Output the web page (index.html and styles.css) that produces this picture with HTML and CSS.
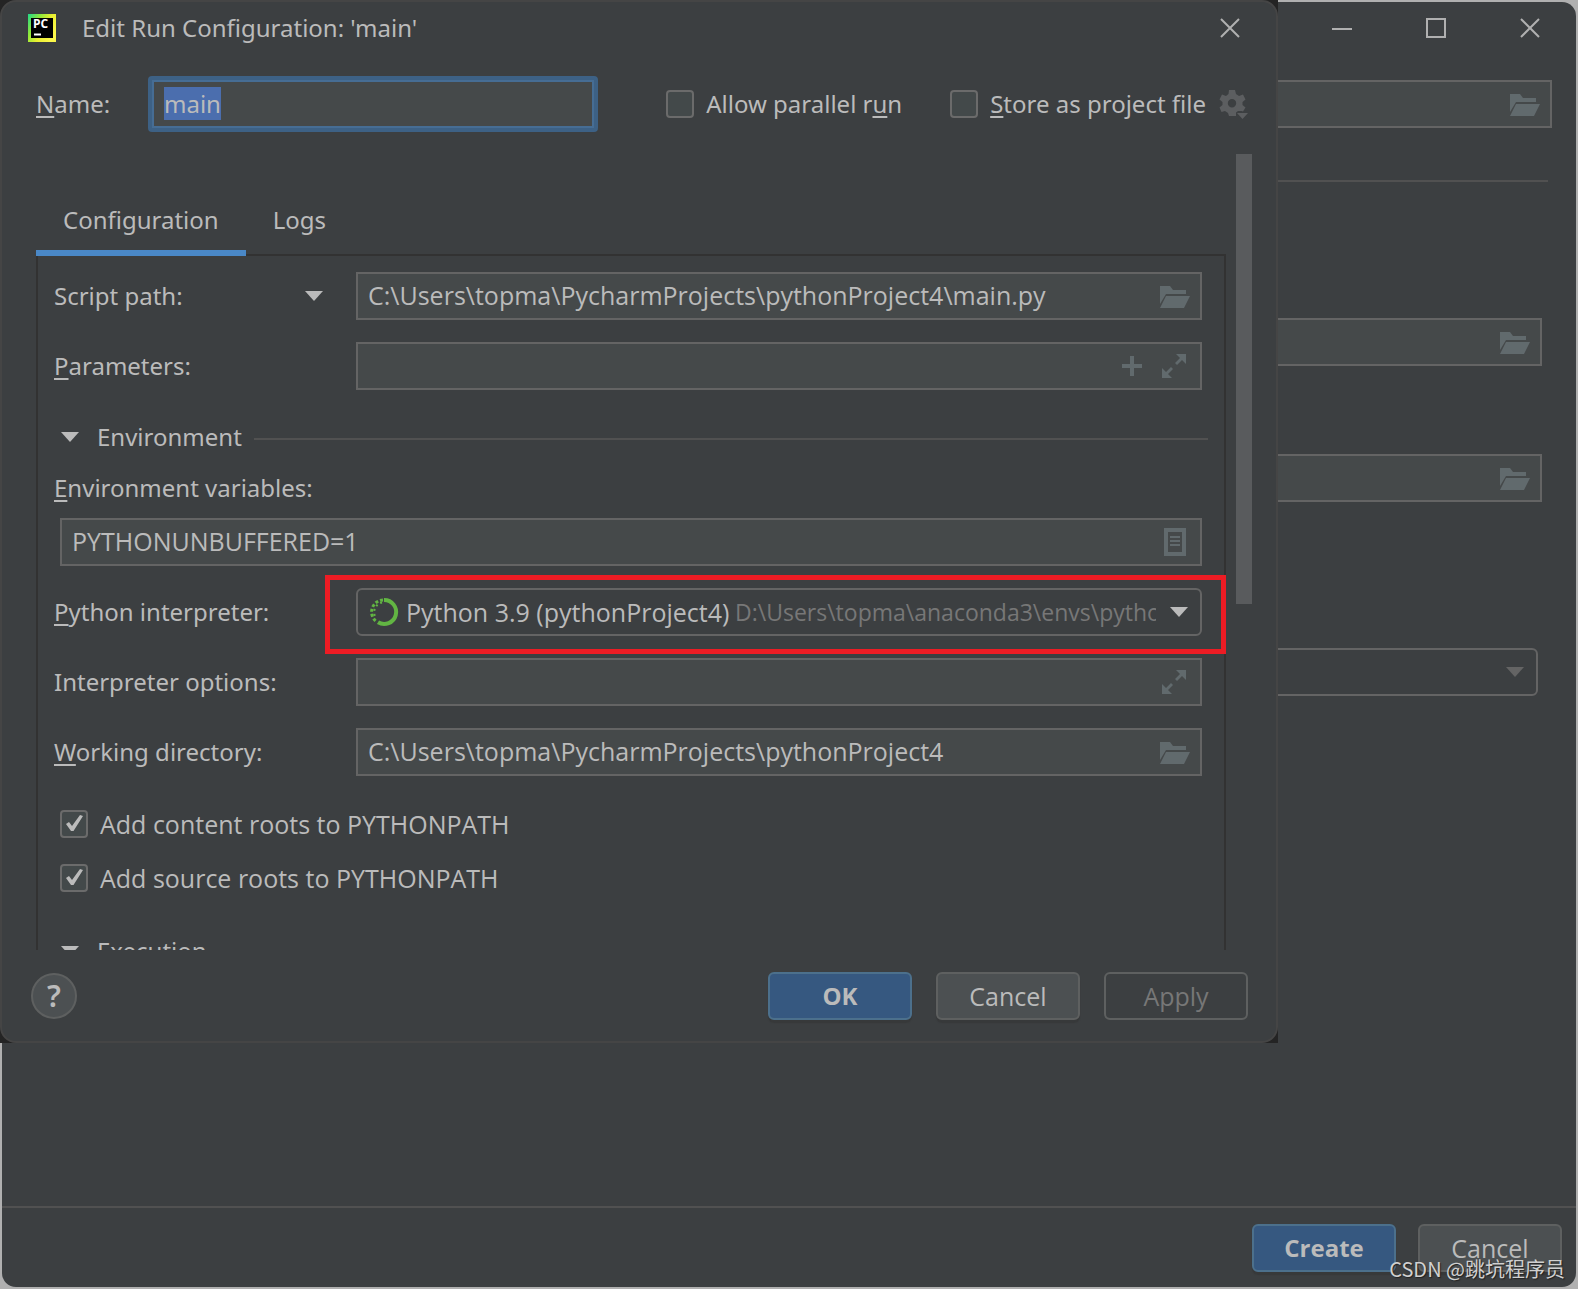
FILE: index.html
```html
<!DOCTYPE html>
<html lang="en">
<head>
<meta charset="utf-8">
<meta name="viewport" content="width=device-width, initial-scale=1">
<title>Edit Run Configuration</title>
<link rel="stylesheet" href="styles.css">
</head>
<body>
<svg class="sprite" aria-hidden="true">
  <symbol id="folder" viewBox="0 0 30 22"><path d="M0 0h10l3 4h13v4H6L0 18z"/><path d="M6 10h24l-6 12H0z"/></symbol>
  <symbol id="arrow" viewBox="0 0 18 10"><path d="M0 0h18l-9 10z"/></symbol>
  <symbol id="close" viewBox="0 0 20 20"><path d="M1 1l18 18M19 1L1 19" fill="none" stroke="currentColor" stroke-width="2"/></symbol>
  <symbol id="expand" viewBox="0 0 24 24"><path d="M14 0h10v10l-4-4-5 5-2-2 5-5zM0 24V14l4 4 5-5 2 2-5 5 4 4z"/></symbol>
</svg>

<main class="window">
  <header class="window-bar">
    <button class="icon-button" aria-label="Minimize"><svg width="20" height="20"><path d="M0 11h20" stroke="currentColor" stroke-width="2"/></svg></button>
    <button class="icon-button" aria-label="Maximize"><svg width="20" height="20"><path d="M1 1h18v18H1z" fill="none" stroke="currentColor" stroke-width="2"/></svg></button>
    <button class="icon-button" aria-label="Close window"><svg width="20" height="20"><use href="#close"/></svg></button>
  </header>
  <div class="window-body">
    <div class="field location"><input type="text" aria-label="Location"><button class="icon-button" aria-label="Browse location"><svg width="30" height="22"><use href="#folder"/></svg></button></div>
    <hr class="rule">
    <div class="interpreter-form">
      <div class="field"><input type="text" aria-label="Environment location"><button class="icon-button" aria-label="Browse environment"><svg width="30" height="22"><use href="#folder"/></svg></button></div>
      <div class="field base"><input type="text" aria-label="Base interpreter"><button class="icon-button" aria-label="Browse interpreter"><svg width="30" height="22"><use href="#folder"/></svg></button></div>
      <div class="combo existing"><select class="empty-select" aria-label="Existing interpreter"><option></option></select><svg class="faded" width="18" height="10"><use href="#arrow"/></svg></div>
    </div>
  </div>
  <footer class="window-footer">
    <button class="button primary">Create</button>
    <button class="button">Cancel</button>
  </footer>
</main>

<div class="dialog-backing">
<section class="dialog" role="dialog" aria-labelledby="dialog-title">
  <header class="dialog-bar">
    <svg width="28" height="28" viewBox="0 0 28 28" aria-hidden="true">
      <defs><linearGradient id="logo" x1="0" y1="0" x2="1" y2="0.6"><stop offset="0" stop-color="#21d789"/><stop offset="0.35" stop-color="#8fe93a"/><stop offset="0.65" stop-color="#e8ee30"/><stop offset="1" stop-color="#fcf84a"/></linearGradient></defs>
      <path fill="url(#logo)" d="M0 0h28v28H0z"/><path d="M3 4h22v20H3z" fill="#000"/>
      <path d="M6 20.500h7" stroke="#fff" stroke-width="2"/>
      <text class="logo-text" x="5" y="14">PC</text>
    </svg>
    <h1 id="dialog-title">Edit Run Configuration: 'main'</h1>
    <button class="icon-button" aria-label="Close dialog"><svg width="20" height="20"><use href="#close"/></svg></button>
  </header>

  <div class="name-row">
    <label for="name"><u>N</u>ame:</label>
    <input id="name" class="name-input" type="text" value="main" autofocus>
    <label class="check"><input type="checkbox"><span>Allow parallel r<u>u</u>n</span></label>
    <label class="check store"><input type="checkbox"><span><u>S</u>tore as project file</span></label>
    <button class="icon-button gear" aria-label="Storage options">
      <svg width="28" height="30" viewBox="0 0 28 30"><path fill-rule="evenodd" d="M9 0h6l1 4 3 2 4-1.500 2.500 5-3 2.500v3l3 2.500-2.500 4-1.500-.5h-3.500l-2 1.500V26H9l-1-3-3-2-3.500 1L-.5 17.500l3-2.500v-3l-3-2.500 2.500-5L6 6l2.500-2zM12 9a4.200 4.200 0 1 0 0 8.400A4.200 4.200 0 0 0 12 9z"/><path d="M17 23h11l-5.500 6z"/></svg>
    </button>
  </div>

  <div class="scroll">
    <div class="content">
      <nav class="tabs" role="tablist">
        <button class="tab active" role="tab" aria-selected="true">Configuration</button>
        <button class="tab" role="tab" aria-selected="false">Logs</button>
      </nav>
      <div class="panel">
        <div class="row">
          <label class="picker" for="script">Script path:<svg width="18" height="10"><use href="#arrow"/></svg></label>
          <div class="field"><input id="script" type="text" value="C:\Users\topma\PycharmProjects\pythonProject4\main.py"><button class="icon-button" aria-label="Browse script"><svg width="30" height="22"><use href="#folder"/></svg></button></div>
        </div>
        <div class="row">
          <label for="params"><u>P</u>arameters:</label>
          <div class="field"><input id="params" type="text"><button class="icon-button macro" aria-label="Insert macro"><svg width="20" height="20"><path d="M8 0h4v8h8v4h-8v8H8v-8H0V8h8z"/></svg></button><button class="icon-button expand" aria-label="Expand parameters"><svg width="24" height="24"><use href="#expand"/></svg></button></div>
        </div>
        <h2 class="section"><svg width="18" height="10"><use href="#arrow"/></svg>Environment</h2>
        <label class="block-label" for="env"><u>E</u>nvironment variables:</label>
        <div class="field env"><input id="env" type="text" value="PYTHONUNBUFFERED=1"><button class="icon-button expand" aria-label="Edit variables"><svg width="22" height="28"><path fill-rule="evenodd" d="M0 0h22v28H0zM4 4v20h14V4z"/><path d="M6 8h10v2H6zM6 12h10v2H6zM6 16h10v2H6z"/></svg></button></div>
        <div class="row">
          <label for="interpreter"><u>P</u>ython interpreter:</label>
          <div class="combo highlighted">
            <svg class="conda" width="28" height="28" viewBox="0 0 28 28" aria-hidden="true"><path d="M14 2A12 12 0 1 1 8 24.300" stroke-width="4"/><path d="M13 2A12 12 0 0 0 7 24" stroke-width="3" stroke-dasharray="3 2"/><path d="M12 4.500A10 10 0 0 0 6 20" stroke-width="2" stroke-dasharray="2 3"/></svg>
            <select id="interpreter"><option>Python 3.9 (pythonProject4)</option></select>
            <span class="path">D:\Users\topma\anaconda3\envs\pythonProject4\python.exe</span>
            <svg width="18" height="10"><use href="#arrow"/></svg>
          </div>
        </div>
        <div class="row">
          <label for="options">Interpreter options:</label>
          <div class="field"><input id="options" type="text"><button class="icon-button expand" aria-label="Expand options"><svg width="24" height="24"><use href="#expand"/></svg></button></div>
        </div>
        <div class="row">
          <label for="workdir"><u>W</u>orking directory:</label>
          <div class="field"><input id="workdir" type="text" value="C:\Users\topma\PycharmProjects\pythonProject4"><button class="icon-button" aria-label="Browse directory"><svg width="30" height="22"><use href="#folder"/></svg></button></div>
        </div>
        <div class="checks">
          <label class="check"><input type="checkbox" checked><span>Add content roots to PYTHONPATH</span></label>
          <label class="check"><input type="checkbox" checked><span>Add source roots to PYTHONPATH</span></label>
        </div>
        <h2 class="section">
          <svg width="18" height="10"><use href="#arrow"/></svg>Execution</h2>
      </div>
    </div>
    <div class="thumb"></div>
  </div>

  <footer class="dialog-footer">
    <button class="help" aria-label="Help">?</button>
    <button class="button primary">OK</button>
    <button class="button">Cancel</button>
    <button class="button" disabled>Apply</button>
  </footer>
</section>
</div>
<div class="watermark">CSDN @跳坑程序员</div>
<script src="main.js"></script>
</body>
</html>
```
FILE: main.js
```js
const nameInput = document.getElementById("name");
nameInput.focus();
nameInput.select();
```
FILE: styles.css
```css
:root {
  --bg: #3c3f41;
  --field: #45494a;
  --line: #646464;
  --text: #bbbbbb;
  --icon: #616a6d;
}

* { box-sizing: border-box; }

body {
  margin: 0;
  min-height: 100vh;
  display: flex;
  padding: 2px;
  border-right: 3px solid #ffffff;
  background: #b0b0b0;
  color: var(--text);
  font: 24px/32px "Noto Sans", "Noto Sans CJK SC", sans-serif;
}

html { background: #b0b0b0; }

button, input, select { font: inherit; color: inherit; margin: 0; }
svg { fill: currentColor; display: block; flex: none; overflow: visible; }
u { text-decoration-thickness: 2px; text-underline-offset: 3px; }
.sprite { position: absolute; width: 0; height: 0; }

.icon-button {
  display: flex;
  padding: 0;
  border: 0;
  background: none;
  color: #b0b0b0;
}

/* Text fields and drop-downs */
.field, .combo, .checks, .button {
  font: 25px/32px "Open Sans", "Noto Sans CJK SC", sans-serif;
}
.field, .combo {
  display: flex;
  align-items: center;
  height: 48px;
  border: 2px solid var(--line);
  min-width: 0;
}
.field {
  gap: 20px;
  padding: 0 10px;
  background: var(--field);
}
.field input {
  flex: 1;
  min-width: 0;
  height: 44px;
  padding: 0 0 2px;
  border: 0;
  outline: 0;
  background: none;
}
.field .icon-button { color: var(--icon); padding-top: 2px; }
.field .macro { padding: 0; }
.field .expand { padding: 0 4px 0 0; }
.combo {
  padding: 0 12px;
  border-radius: 6px;
}
.combo select {
  appearance: none;
  padding: 0;
  border: 0;
  outline: 0;
  background: none;
}
.combo .empty-select { flex: 1; }
.faded { color: #646464; }

/* Buttons */
.button {
  width: 144px;
  height: 48px;
  padding: 0;
  border: 2px solid #5e6060;
  border-radius: 6px;
  background: #4c5052;
  box-shadow: 0 3px 1px #37393a;
}
.button.primary {
  border-color: #4c708c;
  background: #365880;
  font-size: 24px;
  font-weight: 700;
}
.button:disabled {
  background: none;
  box-shadow: none;
  color: #777777;
}

/* Background window */
.window {
  flex: 1;
  display: flex;
  flex-direction: column;
  border-radius: 14px;
  background: var(--bg);
}
.window-bar {
  display: flex;
  justify-content: flex-end;
  gap: 74px;
  padding: 16px 36px 42px;
}
.window-body { flex: 1; padding: 0 24px; }
.rule {
  height: 2px;
  margin: 52px 4px 136px 0;
  border: 0;
  background: #515151;
}
.interpreter-form { padding-right: 10px; }
.base { margin-top: 88px; }
.existing { margin: 146px 4px 0 0; }
.window-footer {
  display: flex;
  justify-content: flex-end;
  gap: 22px;
  padding: 16px 14px 15px;
  border-top: 2px solid #515151;
}

/* Dialog, floating over the window */
.dialog-backing {
  position: absolute;
  inset: 0 303px 246px 0;
  background: #242424;
}
.dialog {
  height: 100%;
  display: flex;
  flex-direction: column;
  border: 2px solid #454545;
  border-radius: 16px;
  background: var(--bg);
}
.dialog-bar {
  display: flex;
  align-items: center;
  padding: 10px 36px 32px 26px;
}
.dialog-bar h1 {
  flex: 1;
  margin: 0 0 0 26px;
  font: inherit;
}
.logo-text { font: 700 12px "Open Sans", sans-serif; fill: #ffffff; }

.name-row {
  display: flex;
  align-items: center;
  padding: 0 28px 22px 34px;
}
.name-row > label:first-child { width: 112px; }
.name-input {
  flex: 1;
  min-width: 0;
  height: 56px;
  padding: 0 12px 2px;
  border: 4px solid #3d6185;
  border-radius: 4px;
  outline: 2px solid #466d94;
  outline-offset: -6px;
  background: var(--field);
}
.name-input::selection { background: rgba(75, 110, 175, 0.99); color: #bbbbbb; }
.name-row .check { margin-left: 68px; }
.name-row .store { margin-left: 48px; }
.gear { margin-left: 14px; padding-top: 2px; color: #5c5e60; }

.check {
  display: flex;
  align-items: center;
  gap: 12px;
}
.check input {
  appearance: none;
  width: 28px;
  height: 28px;
  border: 2px solid #6b6b6b;
  border-radius: 4px;
  background: #43494a;
}
.check input:checked::after {
  content: "";
  display: block;
  width: 24px;
  height: 24px;
  background: var(--text);
  clip-path: path("M4 12L7 10L10 14L18 3L21 4L11.500 19L9 19Z");
}

.scroll {
  flex: 1;
  min-height: 0;
  display: flex;
  gap: 10px;
  padding: 0 24px 0 34px;
  overflow: hidden;
}
.content { flex: 1; min-width: 0; }
.thumb {
  width: 16px;
  height: 450px;
  background: #595b5d;
}
.tabs {
  position: relative;
  z-index: 1;
  display: flex;
  padding-top: 36px;
  margin-bottom: -2px;
}
.tab {
  height: 66px;
  padding: 0 27px;
  border: 0;
  border-bottom: 6px solid transparent;
  background: none;
}
.tab.active { border-color: #4a88c7; }

.panel {
  padding: 16px;
  border: 2px solid #323232;
}
.panel .field, .panel .combo { margin: 0 6px; }
.row {
  display: grid;
  grid-template-columns: 296px minmax(0, 1fr);
  align-items: center;
}
.row + .row, .env + .row { margin-top: 22px; }
.picker {
  display: flex;
  align-items: center;
  justify-content: space-between;
  padding-right: 27px;
}
.section {
  display: flex;
  align-items: center;
  gap: 18px;
  height: 28px;
  margin: 33px 0 21px;
  padding-left: 7px;
  font: inherit;
}
.section::after {
  content: "";
  flex: 1;
  height: 4px;
  margin-left: -6px;
  border-bottom: 2px solid #515151;
}
.block-label { display: block; margin-bottom: 14px; }

.conda { fill: none; stroke: #62b543; margin-right: 8px; }
.path {
  flex: 1;
  min-width: 0;
  margin: 0 14px 0 5px;
  overflow: hidden;
  white-space: nowrap;
  font-size: 23px;
  color: #777777;
}
.highlighted { position: relative; }
.highlighted::after {
  content: "";
  position: absolute;
  inset: -15px -26px -20px -33px;
  border: 5px solid #ed1c24;
  pointer-events: none;
}
.checks {
  display: grid;
  gap: 22px;
  padding: 32px 6px 10px;
}

.dialog-footer {
  display: flex;
  align-items: center;
  gap: 24px;
  padding: 22px 28px 21px 29px;
}
.help {
  width: 46px;
  height: 46px;
  margin-right: auto;
  padding: 0;
  border: 2px solid #5e6060;
  border-radius: 50%;
  background: #4c5052;
  font-size: 30px;
  font-weight: 600;
}

.watermark {
  position: absolute;
  right: 16px;
  bottom: 4px;
  font: 20px/32px "Noto Sans CJK SC", sans-serif;
  color: #d0d0d0;
  text-shadow: 1px 1px 1px #222222;
}
```
